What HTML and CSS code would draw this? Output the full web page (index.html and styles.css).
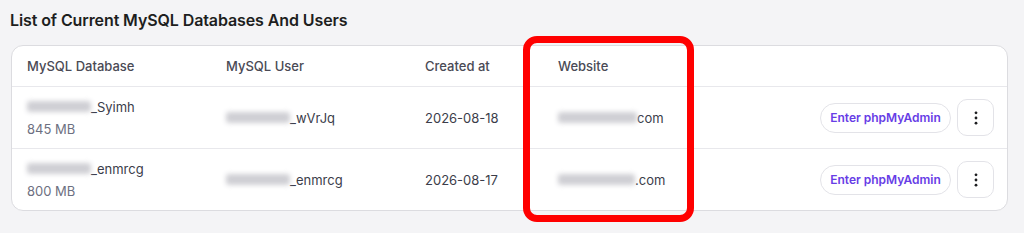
FILE: index.html
```html
<!DOCTYPE html>
<html lang="en">
<head>
<meta charset="utf-8">
<title>MySQL Databases</title>
<link rel="stylesheet" href="styles.css">
</head>
<body>
<div class="page">
  <h2 class="title">List of Current MySQL Databases And Users</h2>
  <div class="card">
    <div class="row head">
      <div class="cell">MySQL Database</div>
      <div class="cell">MySQL User</div>
      <div class="cell">Created at</div>
      <div class="cell">Website</div>
      <div class="cell"></div>
    </div>
    <div class="row">
      <div class="cell db">
        <div class="name"><span class="blur w65"></span>_Syimh</div>
        <div class="size">845 MB</div>
      </div>
      <div class="cell"><span class="blur w65"></span>_wVrJq</div>
      <div class="cell">2026-08-18</div>
      <div class="cell"><span class="blur w80"></span>com</div>
      <div class="cell actions">
        <button class="pma">Enter phpMyAdmin</button>
        <button class="more" aria-label="More">
          <svg width="4" height="14" viewBox="0 0 4 14"><circle cx="2" cy="1.8" r="1.4"/><circle cx="2" cy="7" r="1.4"/><circle cx="2" cy="12.2" r="1.4"/></svg>
        </button>
      </div>
    </div>
    <div class="row last">
      <div class="cell db">
        <div class="name"><span class="blur w65"></span>_enmrcg</div>
        <div class="size">800 MB</div>
      </div>
      <div class="cell"><span class="blur w65"></span>_enmrcg</div>
      <div class="cell">2026-08-17</div>
      <div class="cell"><span class="blur w78"></span>.com</div>
      <div class="cell actions">
        <button class="pma">Enter phpMyAdmin</button>
        <button class="more" aria-label="More">
          <svg width="4" height="14" viewBox="0 0 4 14"><circle cx="2" cy="1.8" r="1.4"/><circle cx="2" cy="7" r="1.4"/><circle cx="2" cy="12.2" r="1.4"/></svg>
        </button>
      </div>
    </div>
  </div>
  <div class="highlight"></div>
</div>
</body>
</html>
```

FILE: styles.css
```css
* { box-sizing: border-box; }
html, body { margin: 0; padding: 0; }
body {
  background: #f4f4f6;
  font-family: Inter, "Noto Sans", "Liberation Sans", sans-serif;
  color: #3b3d4a;
  width: 1024px;
  height: 233px;
  overflow: hidden;
}
.page {
  position: relative;
  padding: 9px 16px 0 11px;
}
.title {
  margin: 0 0 14px -1px;
  font-size: 16px;
  font-weight: 600;
  color: #1d1e20;
  line-height: 22px;
  letter-spacing: -0.1px;
}
.card {
  background: #fff;
  border: 1px solid #dcdce0;
  border-radius: 12px;
  overflow: hidden;
}
.row {
  display: grid;
  grid-template-columns: 199px 199px 133px 1fr auto;
  align-items: center;
  padding: 0 13px 0 15px;
  height: 62px;
  border-bottom: 1px solid #e8e8ec;
  font-size: 13px;
}
.row.last { border-bottom: 0; height: 61px; }
.row.head {
  height: 41px;
  font-weight: 500;
  color: #4a4a55;
}
.cell { white-space: nowrap; display: flex; align-items: center; }
.cell.db { flex-direction: column; align-items: flex-start; gap: 6px; }
.name { display: flex; align-items: center; }
.size { color: #6d7081; }
.blur {
  display: inline-block;
  height: 11px;
  background: #cfcfd4;
  border-radius: 3px;
  filter: blur(2.5px);
}
.w65 { width: 64px; }
.w80 { width: 79px; }
.w78 { width: 77px; }
.actions { gap: 6px; }
.pma {
  font-family: inherit;
  font-size: 12px;
  font-weight: 600;
  color: #673de6;
  background: #fff;
  border: 1px solid #e3e3e8;
  border-radius: 15px;
  height: 30px;
  width: 131px;
  padding: 0;
  cursor: pointer;
}
.more {
  width: 37px;
  height: 37px;
  border: 1px solid #e3e3e8;
  border-radius: 10px;
  background: #fff;
  display: flex;
  align-items: center;
  justify-content: center;
  padding: 0;
}
.more svg { fill: #1d1e20; }
.highlight {
  position: absolute;
  left: 523px;
  top: 36px;
  width: 171px;
  height: 186px;
  border: 7px solid #f00;
  border-radius: 14px;
  pointer-events: none;
}
```
